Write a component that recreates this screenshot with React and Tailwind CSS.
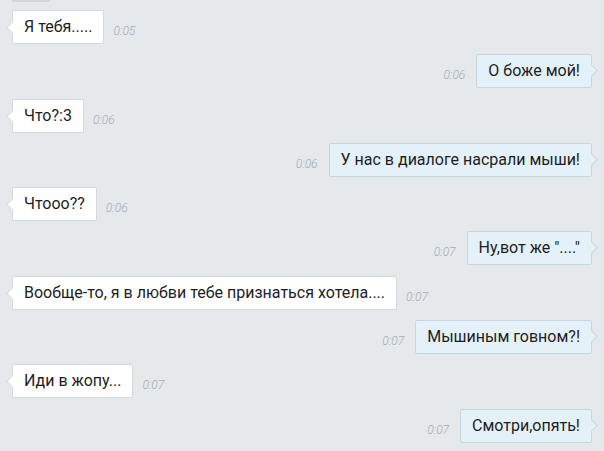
const messages = [
  { out: false, text: 'Я тебя.....', time: '0:05' },
  { out: true, text: 'О боже мой!', time: '0:06' },
  { out: false, text: 'Что?:3', time: '0:06' },
  { out: true, text: 'У нас в диалоге насрали мыши!', time: '0:06' },
  { out: false, text: 'Чтоoo??', time: '0:06' },
  { out: true, text: 'Ну,вот же "...."', time: '0:07' },
  { out: false, text: 'Вообще-то, я в любви тебе признаться хотела....', time: '0:07' },
  { out: true, text: 'Мышиным говном?!', time: '0:07' },
  { out: false, text: 'Иди в жопу...', time: '0:07' },
  { out: true, text: 'Смотри,опять!', time: '0:07' },
];

const Time = ({ value }) => (
  <span className="text-[12px] italic font-light text-[#a3abb3] pt-[8px]">{value}</span>
);

const Bubble = ({ out, text }) => (
  <div
    className={`relative h-[34px] flex items-center px-[11px] rounded-[2px] border text-[16px] text-[#1e1e1e] ${
      out ? 'bg-[#e5f1f8] border-[#c5d6e0]' : 'bg-white border-[#d3d8dd]'
    }`}
  >
    {out ? (
      <div className="absolute right-[-5px] top-[11px] w-[9px] h-[9px] rotate-45 bg-[#e5f1f8] border-t border-r border-[#c5d6e0]" />
    ) : (
      <div className="absolute left-[-5px] top-[12px] w-[9px] h-[9px] rotate-45 bg-white border-l border-b border-[#d3d8dd]" />
    )}
    <span className="relative whitespace-nowrap">{text}</span>
  </div>
);

export default function App() {
  return (
    <div
      className="w-[604px] h-[451px] overflow-hidden bg-[#e5e9ec] flex flex-col"
      style={{ fontFamily: 'Roboto, "Noto Sans", sans-serif' }}
    >
      <div className="ml-[12px] w-[38px] h-[2px] bg-[#d2d7dc] shrink-0" />
      <div className="flex flex-col gap-[10.3px] pt-[8px]">
        {messages.map((m, i) =>
          m.out ? (
            <div key={i} className="flex justify-end items-center gap-[11px] pr-[12px]">
              <Time value={m.time} />
              <Bubble out text={m.text} />
            </div>
          ) : (
            <div key={i} className="flex items-center gap-[9px] pl-[12px]">
              <Bubble text={m.text} />
              <Time value={m.time} />
            </div>
          )
        )}
      </div>
    </div>
  );
}
